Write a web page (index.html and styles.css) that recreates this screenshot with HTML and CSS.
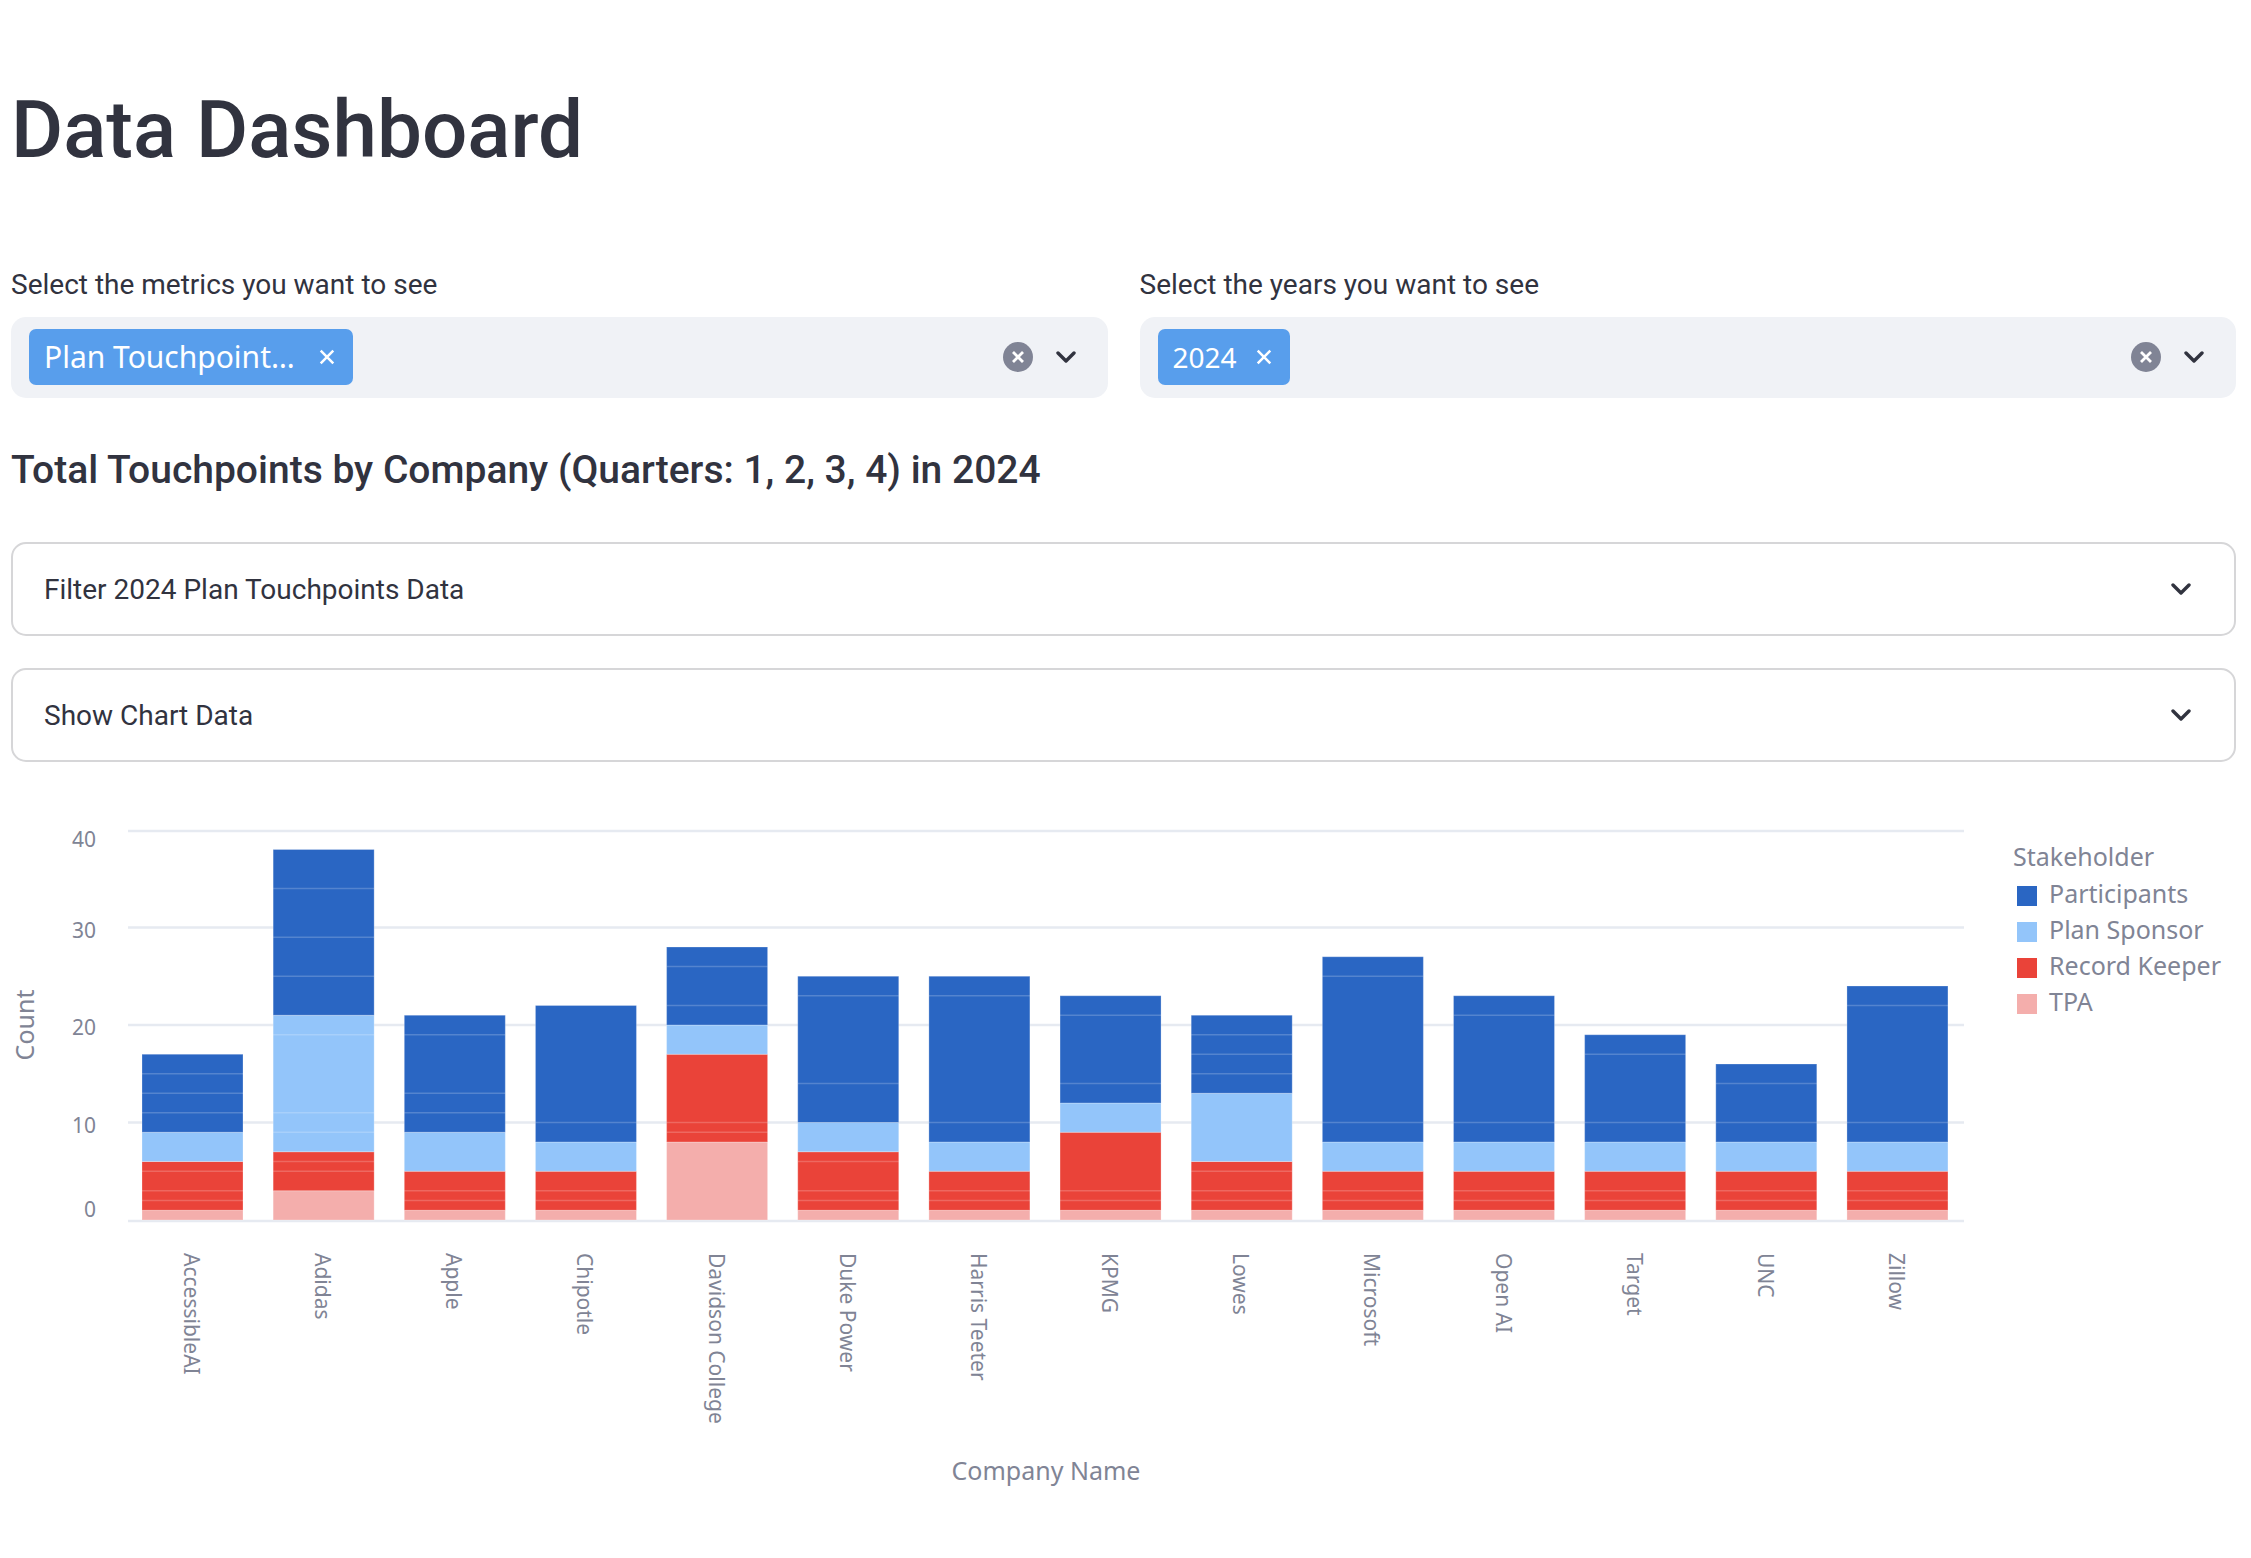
FILE: index.html
```html
<!DOCTYPE html>
<html lang="en">
<head>
    <meta charset="UTF-8">
    <meta name="viewport" content="width=device-width, initial-scale=1.0">
    <title>Data Dashboard</title>
    <link rel="stylesheet" href="styles.css">
</head>
<body>
    <div class="main">
        <h1 class="page-title">Data Dashboard</h1>

        <div class="filters">
            <div class="filter">
                <label class="filter-label">Select the metrics you want to see</label>
                <div class="select-box">
                    <span class="tag tag-metric">
                        <span class="tag-text">Plan Touchpoint…</span>
                        <svg class="tag-close" viewBox="0 0 14 14"><path d="M1.5 1.5l11 11M12.5 1.5l-11 11"/></svg>
                    </span>
                    <svg class="clear-icon" viewBox="0 0 30 30"><circle cx="15" cy="15" r="15"/><path d="M10 10l10 10M20 10l-10 10"/></svg>
                    <svg class="chevron" viewBox="0 0 20 12"><path d="M2 2l8 8 8-8"/></svg>
                </div>
            </div>
            <div class="filter">
                <label class="filter-label">Select the years you want to see</label>
                <div class="select-box">
                    <span class="tag tag-year">
                        <span class="tag-text">2024</span>
                        <svg class="tag-close" viewBox="0 0 14 14"><path d="M1.5 1.5l11 11M12.5 1.5l-11 11"/></svg>
                    </span>
                    <svg class="clear-icon" viewBox="0 0 30 30"><circle cx="15" cy="15" r="15"/><path d="M10 10l10 10M20 10l-10 10"/></svg>
                    <svg class="chevron" viewBox="0 0 20 12"><path d="M2 2l8 8 8-8"/></svg>
                </div>
            </div>
        </div>

        <h2 class="section-title">Total Touchpoints by Company (Quarters: 1, 2, 3, 4) in 2024</h2>

        <div class="expander">
            <span>Filter 2024 Plan Touchpoints Data</span>
            <svg class="chevron" viewBox="0 0 20 12"><path d="M2 2l8 8 8-8"/></svg>
        </div>
        <div class="expander">
            <span>Show Chart Data</span>
            <svg class="chevron" viewBox="0 0 20 12"><path d="M2 2l8 8 8-8"/></svg>
        </div>

        <svg id="chart" class="chart" viewBox="0 800 2225 720"></svg>
    </div>
    <script src="chart.js"></script>
</body>
</html>
```

FILE: styles.css
```css
body {
    margin: 0;
    background-color: #fff;
    color: #31333f;
    font-family: Roboto, "Liberation Sans", sans-serif;
}
.main {
    padding: 0 15px 0 11px;
}
.page-title {
    margin: 0;
    padding-top: 80px;
    font-size: 80px;
    line-height: 100px;
    font-weight: 500;
}
.filters {
    display: grid;
    grid-template-columns: 1fr 1fr;
    column-gap: 32px;
    margin-top: 87px;
}
.filter-label {
    display: block;
    font-size: 28px;
    line-height: 36px;
    margin-bottom: 14px;
}
.select-box {
    display: flex;
    align-items: center;
    height: 81px;
    padding: 0 32px 2px 18px;
    background-color: #f0f2f6;
    border-radius: 15px;
    box-sizing: border-box;
}
.tag {
    display: flex;
    align-items: center;
    justify-content: space-between;
    height: 56px;
    padding: 0 18px 0 15px;
    box-sizing: border-box;
    background-color: #589eec;
    border-radius: 7px;
    color: #fff;
    font-family: "Noto Sans", sans-serif;
    font-size: 28px;
    margin-right: auto;
}
.tag-metric {
    width: 324px;
    font-size: 30px;
    padding-left: 15px;
}
.tag-year {
    width: 132px;
    padding-left: 15px;
}
.tag-close {
    width: 16px;
    height: 16px;
    fill: none;
    stroke: #fff;
    stroke-width: 2.2;
}
.clear-icon {
    width: 30px;
    height: 30px;
    margin-right: 23px;
}
.clear-icon circle {
    fill: #808495;
}
.clear-icon path {
    fill: none;
    stroke: #fff;
    stroke-width: 2.8;
}
.chevron {
    width: 20px;
    height: 12px;
    fill: none;
    stroke: #31333f;
    stroke-width: 3.4;
    stroke-linecap: round;
    stroke-linejoin: round;
}
.section-title {
    margin: 46px 0 0;
    font-size: 39px;
    line-height: 52px;
    font-weight: 500;
}
.expander {
    display: flex;
    align-items: center;
    justify-content: space-between;
    height: 94px;
    padding: 0 43px 0 31px;
    margin-top: 32px;
    box-sizing: border-box;
    border: 2px solid #d6d6d8;
    border-radius: 15px;
    font-size: 28px;
}
.section-title + .expander {
    margin-top: 46px;
}
.chart {
    display: block;
    width: 2225px;
    height: 720px;
    margin-top: 38px;
    overflow: visible;
    font-family: "Noto Sans", sans-serif;
}
.grid-line {
    stroke: #e6eaf1;
    stroke-width: 2.5;
}
.bar-seg {
    stroke: #fff;
    stroke-opacity: 0.25;
    stroke-width: 1;
}
.bar-line {
    stroke: #fff;
    stroke-opacity: 0.2;
    stroke-width: 1.5;
}
.axis-text {
    fill: #808495;
    font-size: 21px;
}
.axis-title {
    fill: #808495;
    font-size: 25px;
}
```

FILE: chart.js
```js
// stacked bars: cut = top of TPA, Record Keeper, Plan Sponsor, Participants
// lines = the lighter record borders inside the stack
const companies = [
    { name: 'AccessibleAI', cut: [1, 6, 9, 17], lines: [2, 3, 5, 11, 13, 15] },
    { name: 'Adidas', cut: [3, 7, 21, 38], lines: [5, 6, 9, 11, 19, 25, 29, 34] },
    { name: 'Apple', cut: [1, 5, 9, 21], lines: [2, 3, 11, 13, 19] },
    { name: 'Chipotle', cut: [1, 5, 8, 22], lines: [2, 3, 10] },
    { name: 'Davidson College', cut: [8, 17, 20, 28], lines: [9, 10, 22, 26] },
    { name: 'Duke Power', cut: [1, 7, 10, 25], lines: [2, 3, 6, 14, 23] },
    { name: 'Harris Teeter', cut: [1, 5, 8, 25], lines: [2, 3, 10, 23] },
    { name: 'KPMG', cut: [1, 9, 12, 23], lines: [2, 3, 14, 21] },
    { name: 'Lowes', cut: [1, 6, 13, 21], lines: [2, 3, 5, 15, 17, 19] },
    { name: 'Microsoft', cut: [1, 5, 8, 27], lines: [2, 3, 10, 25] },
    { name: 'Open AI', cut: [1, 5, 8, 23], lines: [2, 3, 10, 21] },
    { name: 'Target', cut: [1, 5, 8, 19], lines: [2, 3, 10, 17] },
    { name: 'UNC', cut: [1, 5, 8, 16], lines: [2, 3, 10, 14] },
    { name: 'Zillow', cut: [1, 5, 8, 24], lines: [2, 3, 10, 22] }
];
const colors = ['#f4aeac', '#ea4339', '#93c5fa', '#2a66c3'];
const legend = [
    ['Participants', '#2a66c3'],
    ['Plan Sponsor', '#93c5fa'],
    ['Record Keeper', '#ea4339'],
    ['TPA', '#f4aeac']
];
const ticks = [
    { value: 0, y: 1217 },
    { value: 10, y: 1133 },
    { value: 20, y: 1035 },
    { value: 30, y: 938 },
    { value: 40, y: 847 }
];

const zero = 1220;
const unit = 9.75;
const barX = 142 - 11;
const barStep = 131.15;
const barW = 101;
const yOf = count => zero - count * unit;

let out = '';

ticks.forEach(tick => {
    const gy = tick.value === 0 ? 1221 : yOf(tick.value) + (tick.value === 40 ? 1 : 0);
    out += `<line class="grid-line" x1="117" x2="1953" y1="${gy}" y2="${gy}"/>`;
    out += `<text class="axis-text" x="85" y="${tick.y}" text-anchor="end">${tick.value}</text>`;
});

companies.forEach((company, i) => {
    const x = barX + i * barStep;
    let base = 0;
    company.cut.forEach((top, c) => {
        out += `<rect class="bar-seg" x="${x}" y="${yOf(top)}" width="${barW}" height="${(top - base) * unit}" fill="${colors[c]}"/>`;
        base = top;
    });
    company.lines.forEach(count => {
        out += `<line class="bar-line" x1="${x}" x2="${x + barW}" y1="${yOf(count)}" y2="${yOf(count)}"/>`;
    });
    out += `<text class="axis-text" transform="translate(${x + barW / 2 - 8.5} 1253) rotate(90)">${company.name}</text>`;
});

out += '<text class="axis-title" transform="translate(23 1025) rotate(-90)" text-anchor="middle">Count</text>';
out += '<text class="axis-title" x="1035" y="1480" text-anchor="middle">Company Name</text>';

out += '<text class="axis-title" x="2002" y="866">Stakeholder</text>';
legend.forEach((item, i) => {
    out += `<rect x="2006" y="${886 + i * 36}" width="20" height="20" fill="${item[1]}"/>`;
    out += `<text class="axis-title" x="2038" y="${903 + i * 36}">${item[0]}</text>`;
});

document.getElementById('chart').innerHTML = out;
```
